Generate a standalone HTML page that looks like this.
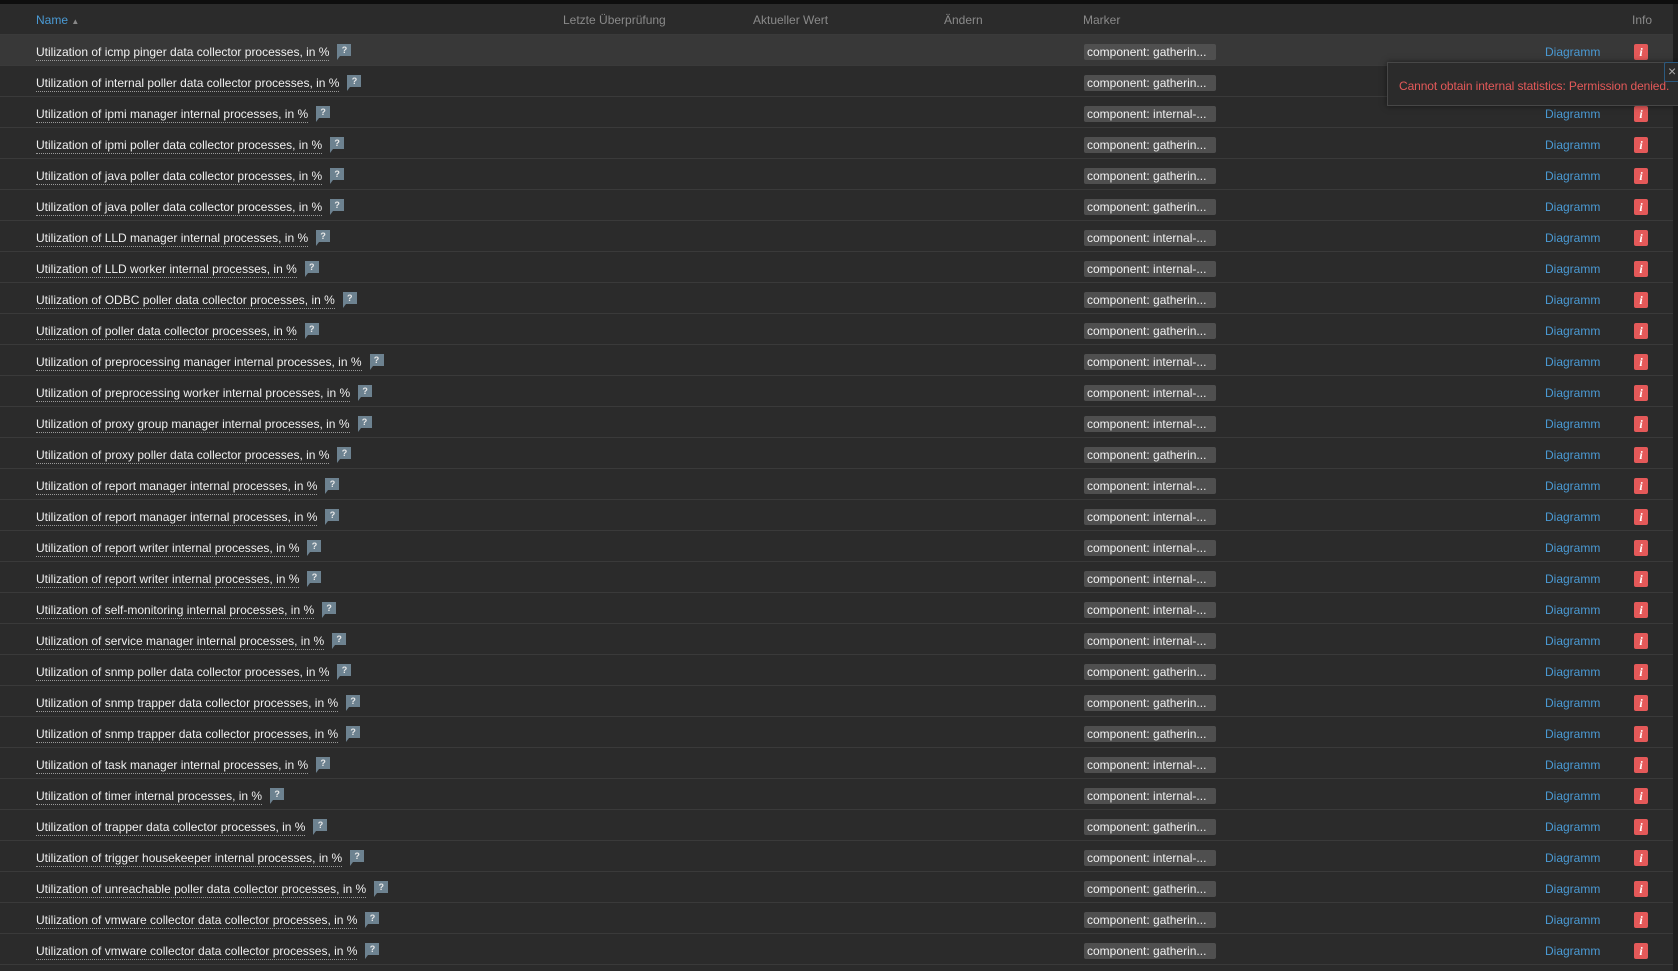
<!DOCTYPE html>
<html><head><meta charset="utf-8"><style>
*{margin:0;padding:0;box-sizing:border-box}
body{width:1678px;height:971px;background:#1f1f1f;font-family:"Liberation Sans",Arial,sans-serif;font-size:12px;overflow:hidden;position:relative}
.top{position:absolute;left:0;top:0;width:1678px;height:4px;background:#0e0e0e}
.tbl{position:absolute;left:0;top:4px;width:1673px;height:967px;background:#2b2b2b}
.hdr{position:absolute;left:0;top:4px;width:1673px;height:31px;border-bottom:1px solid #3a3a3a}
.h{position:absolute;top:9px;color:#8a8a8a;font-size:12px}
.row{position:absolute;left:0;width:1673px;height:31px;border-bottom:1px solid #3a3a3a}
.row.hl{background:#383838}
.nm{position:absolute;left:36px;top:11px;color:#f0f0f0;border-bottom:1px dotted #999;line-height:13px;padding-bottom:1px;white-space:nowrap;font-size:12px}
.q{display:inline-block;position:absolute;top:-2px;width:14px;height:12px;background:#6d8290;color:#e8e8e8;font-size:9px;text-align:center;line-height:12px;font-weight:bold}
.q:after{content:"";position:absolute;left:0;bottom:-4px;border-left:3px solid #6d8290;border-bottom:4px solid transparent}
.tag{position:absolute;left:1084px;top:9px;width:132px;height:16px;background:#4f4f4f;border-radius:2px;color:#f0f0f0;padding-left:3px;line-height:16px;white-space:nowrap;font-size:12px}
.dg{position:absolute;left:1545px;top:10px;color:#4a9ad4;font-size:12px}
.ic{position:absolute;left:1634px;top:9px;width:14px;height:16px;background:#e45959;border-radius:2px;color:#fff;font:italic bold 12px "Liberation Serif",serif;text-align:center;line-height:16px}
.tip{position:absolute;left:1387px;top:62px;width:300px;height:44px;background:#2b2b2b;border:1px solid #474747;box-shadow:0 0 6px rgba(0,0,0,.5)}
.tip span{position:absolute;left:11px;top:16px;color:#e45959;font-size:12px;white-space:nowrap;letter-spacing:-0.1px}
.cl{position:absolute;left:1664px;top:62px;width:20px;height:20px;border:1px solid #2b5a80;background:#2b2b2b;color:#aaa;font-size:14px;line-height:17px;padding-left:3px;border-radius:2px}
</style></head><body>
<div class="top"></div>
<div class="tbl"></div>
<div class="hdr">
<span class="h" style="left:36px;color:#4a9ad4">Name <span style="font-size:8px;color:#888">▲</span></span>
<span class="h" style="left:563px">Letzte Überprüfung</span>
<span class="h" style="left:753px">Aktueller Wert</span>
<span class="h" style="left:944px">Ändern</span>
<span class="h" style="left:1083px">Marker</span>
<span class="h" style="left:1632px">Info</span>
</div>
<div id="rows"></div>
<script>
var d=[["icmp pinger data collector processes","g"],["internal poller data collector processes","g"],["ipmi manager internal processes","i"],["ipmi poller data collector processes","g"],["java poller data collector processes","g"],["java poller data collector processes","g"],["LLD manager internal processes","i"],["LLD worker internal processes","i"],["ODBC poller data collector processes","g"],["poller data collector processes","g"],["preprocessing manager internal processes","i"],["preprocessing worker internal processes","i"],["proxy group manager internal processes","i"],["proxy poller data collector processes","g"],["report manager internal processes","i"],["report manager internal processes","i"],["report writer internal processes","i"],["report writer internal processes","i"],["self-monitoring internal processes","i"],["service manager internal processes","i"],["snmp poller data collector processes","g"],["snmp trapper data collector processes","g"],["snmp trapper data collector processes","g"],["task manager internal processes","i"],["timer internal processes","i"],["trapper data collector processes","g"],["trigger housekeeper internal processes","i"],["unreachable poller data collector processes","g"],["vmware collector data collector processes","g"],["vmware collector data collector processes","g"]];
var h="";
for(var k=0;k<d.length;k++){
var t=35+k*31;
h+='<div class="row'+(k==0?' hl':'')+'" style="top:'+t+'px"><span class="nm">Utilization of '+d[k][0]+', in %<span class="q" style="right:-22px">?</span></span><span class="tag">component: '+(d[k][1]=="g"?"gatherin...":"internal-...")+'</span>'+(k==1?'':'<span class="dg">Diagramm</span><span class="ic">i</span>')+'</div>';
}
document.getElementById("rows").innerHTML=h;
</script>
<div class="tip"><span>Cannot obtain internal statistics: Permission denied.</span></div>
<div class="cl">×</div>
</body></html>
